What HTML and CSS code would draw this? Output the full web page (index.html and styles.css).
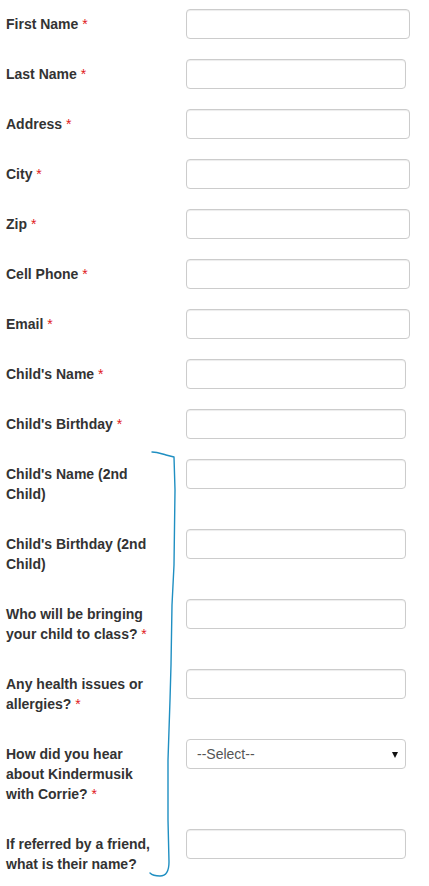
FILE: index.html
```html
<!DOCTYPE html>
<html lang="en">
<head>
<meta charset="utf-8">
<title>Registration</title>
<link rel="stylesheet" href="styles.css">
</head>
<body>
<form class="form">
  <div class="row"><label class="lbl required">First Name</label><input class="ctl wide" type="text"></div>
  <div class="row"><label class="lbl required">Last Name</label><input class="ctl narrow" type="text"></div>
  <div class="row"><label class="lbl required">Address</label><input class="ctl wide" type="text"></div>
  <div class="row"><label class="lbl required">City</label><input class="ctl wide" type="text"></div>
  <div class="row"><label class="lbl required">Zip</label><input class="ctl wide" type="text"></div>
  <div class="row"><label class="lbl required">Cell Phone</label><input class="ctl wide" type="text"></div>
  <div class="row"><label class="lbl required">Email</label><input class="ctl wide" type="text"></div>
  <div class="row"><label class="lbl required">Child's Name</label><input class="ctl narrow" type="text"></div>
  <div class="row"><label class="lbl required">Child's Birthday</label><input class="ctl narrow" type="text"></div>
  <div class="row"><label class="lbl">Child's Name (2nd Child)</label><input class="ctl narrow" type="text"></div>
  <div class="row"><label class="lbl">Child's Birthday (2nd Child)</label><input class="ctl narrow" type="text"></div>
  <div class="row"><label class="lbl required">Who will be bringing your child to class?</label><input class="ctl narrow" type="text"></div>
  <div class="row"><label class="lbl required">Any health issues or allergies?</label><input class="ctl narrow" type="text"></div>
  <div class="row"><label class="lbl required">How did you hear about Kindermusik with Corrie?</label>
    <div class="selwrap narrow"><select class="ctl sel"><option>--Select--</option></select></div></div>
  <div class="row"><label class="lbl">If referred by a friend, what is their name?</label><input class="ctl narrow" type="text"></div>
</form>
<svg class="bracket" width="429" height="886" viewBox="0 0 429 886" aria-hidden="true">
  <path d="M152,452 C158,452 162,454 166,455 L174,457 L175,490 L174,565 L172,605 L171,665 L170,700 L168,760 L168,820 L169,862 C169,872 165,876 160,876 C156,876 152,875 150,873" fill="none" stroke="#1f8fc2" stroke-width="1.4" stroke-linejoin="round" stroke-linecap="round"/>
</svg>
</body>
</html>
```
FILE: styles.css
```css
html, body {
  margin: 0;
  padding: 0;
  background: #fff;
}
body {
  font-family: "Liberation Sans", Arial, Helvetica, sans-serif;
  font-size: 14px;
  color: #333;
  position: relative;
  width: 429px;
  height: 886px;
  overflow: hidden;
}
.form {
  padding: 9px 0 0 6px;
  display: flex;
  flex-direction: column;
  gap: 20px;
}
.row {
  display: flex;
  align-items: flex-start;
}
.lbl {
  width: 158px;
  margin-right: 22px;
  flex: none;
  font-weight: bold;
  line-height: 20px;
  padding: 5px 0;
}
.required::after {
  content: " *";
  color: #e0191b;
  font-weight: normal;
}
.ctl {
  box-sizing: border-box;
  height: 30px;
  border: 1px solid #ccc;
  border-radius: 4px;
  box-shadow: inset 0 1px 1px rgba(0, 0, 0, 0.075);
  background: #fff;
  margin: 0;
  padding: 4px 10px;
  font-family: "Liberation Sans", Arial, Helvetica, sans-serif;
  font-size: 14px;
  color: #555;
  outline: none;
}
.wide {
  width: 224px;
}
.narrow {
  width: 220px;
}
.selwrap {
  position: relative;
  height: 30px;
}
.sel {
  width: 100%;
  appearance: none;
  -webkit-appearance: none;
  box-shadow: none;
  padding: 4px 10px;
}
.selwrap::after {
  content: "";
  position: absolute;
  right: 8px;
  top: 13px;
  width: 0;
  height: 0;
  border-left: 3px solid transparent;
  border-right: 3px solid transparent;
  border-top: 6px solid #111;
  pointer-events: none;
}
.bracket {
  position: absolute;
  left: 0;
  top: 0;
  pointer-events: none;
}
```
